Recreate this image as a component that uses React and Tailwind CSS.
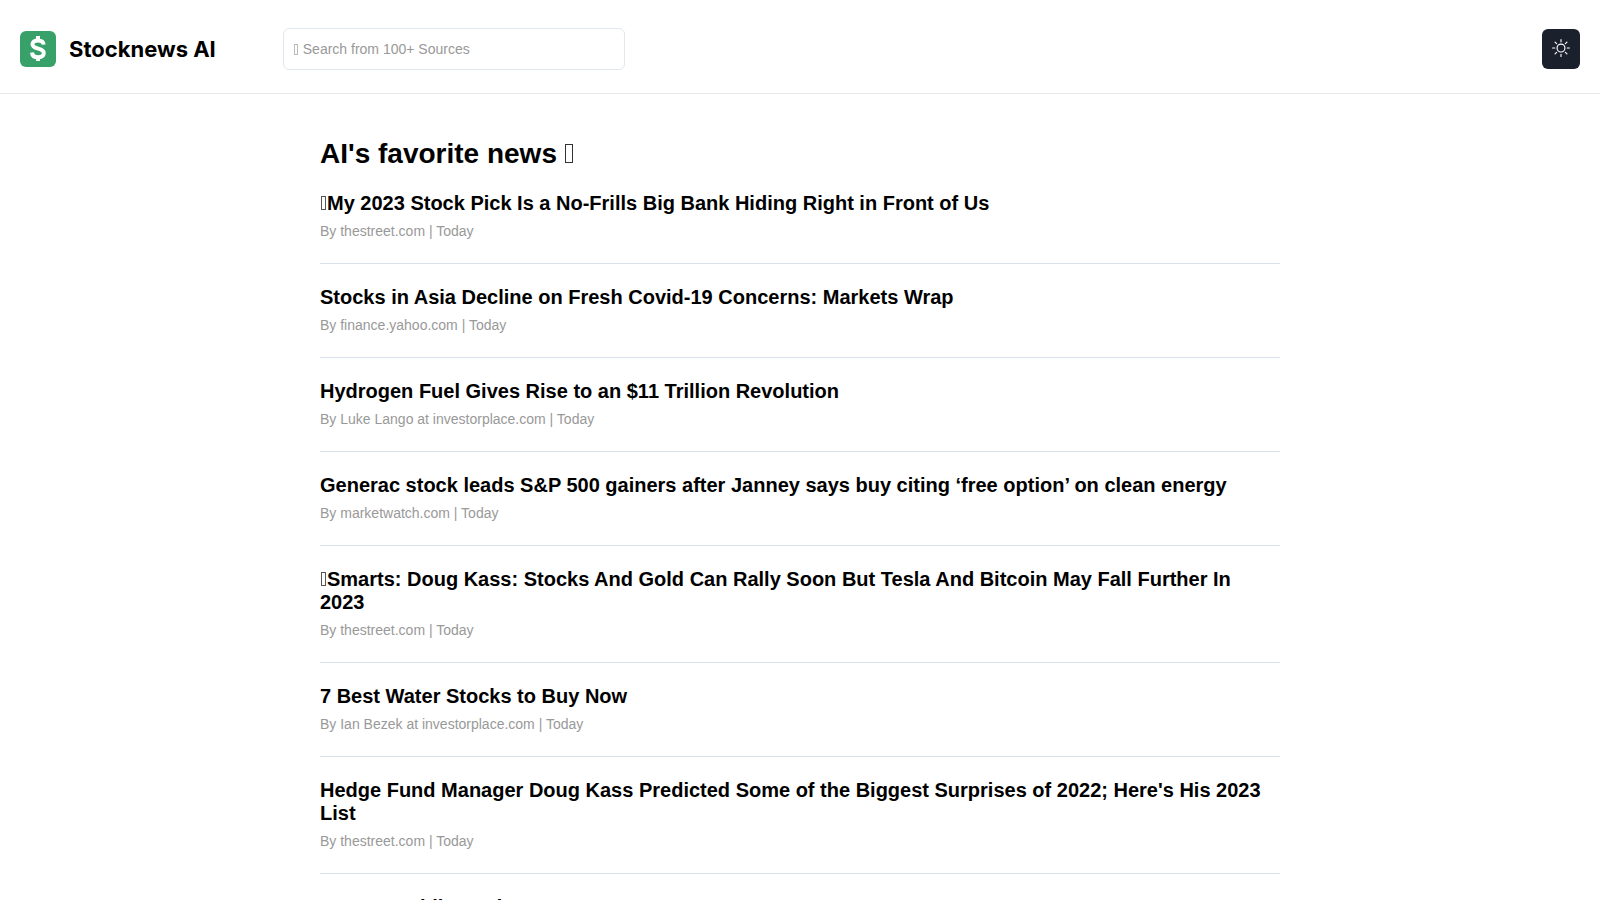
import { BsSun } from "react-icons/bs";

const articles = [
  { title: "My 2023 Stock Pick Is a No-Frills Big Bank Hiding Right in Front of Us", source: "thestreet.com", marked: true },
  { title: "Stocks in Asia Decline on Fresh Covid-19 Concerns: Markets Wrap", source: "finance.yahoo.com" },
  { title: "Hydrogen Fuel Gives Rise to an $11 Trillion Revolution", source: "Luke Lango at investorplace.com" },
  { title: "Generac stock leads S&P 500 gainers after Janney says buy citing ‘free option’ on clean energy", source: "marketwatch.com" },
  { title: "Smarts: Doug Kass: Stocks And Gold Can Rally Soon But Tesla And Bitcoin May Fall Further In 2023", source: "thestreet.com", marked: true },
  { title: "7 Best Water Stocks to Buy Now", source: "Ian Bezek at investorplace.com" },
  { title: "Hedge Fund Manager Doug Kass Predicted Some of the Biggest Surprises of 2022; Here's His 2023 List", source: "thestreet.com" },
  { title: "7 Great Public Trades", source: "investorplace.com" },
];

// small outlined box used as a text marker
function Marker({ className }) {
  return <span aria-hidden="true" className={`inline-block border ${className}`} />;
}

function Logo() {
  return (
    <a href="#" className="flex items-center gap-[13px] text-black">
      <svg width="36" height="36" viewBox="0 0 36 36" aria-hidden="true">
        <rect width="36" height="36" rx="6" fill="#38a169" />
        <path
          d="M23.6 13.6C23.4 10.8 21.4 9.4 18 9.4c-3.3 0-5.5 1.5-5.5 3.9 0 5.8 11.3 2.9 11.3 8.7 0 2.500-2.200 4.200-5.700 4.200-3.700 0-5.900-1.700-6.100-4.700M18 5v4.500M18 26v4"
          fill="none"
          stroke="#fff"
          strokeWidth="4"
        />
      </svg>
      <span className="font-[Inter,sans-serif] text-[22px] leading-7 font-bold">Stocknews AI</span>
    </a>
  );
}

function SearchBox() {
  return (
    <div className="relative ml-[67px]">
      <Marker className="absolute top-4 left-[11px] h-[11px] w-1 border-[#bbb]" />
      <input
        type="search"
        aria-label="Search news"
        placeholder="Search from 100+ Sources"
        className="block h-[42px] w-[342px] rounded-md border border-[#e2e8f0] pr-2.5 pl-[19px] text-sm placeholder:text-[#999]"
      />
    </div>
  );
}

function Article({ title, source, marked }) {
  return (
    <li className="border-b border-[#d9e2ec] pt-[22px] pb-6">
      <h2 className="text-xl leading-[23px] font-bold">
        <a href="#">
          {marked && <Marker className="mx-px h-3.5 w-[5px] border-[#555]" />}
          {title}
        </a>
      </h2>
      <p className="mt-2 text-sm leading-4 text-[#999]">By {source} | Today</p>
    </li>
  );
}

export default function App() {
  return (
    <div className="h-screen overflow-hidden bg-white font-['Liberation_Sans',sans-serif] text-black">
      <header className="flex items-center border-b border-[#eaeaea] px-5 pt-7 pb-[23px]">
        <Logo />
        <SearchBox />
        <button type="button" aria-label="Toggle theme" className="ml-auto flex h-10 w-[38px] items-center justify-center rounded-md bg-[#1a202c] pb-0.5 text-white">
          <BsSun size={18} />
        </button>
      </header>
      <main className="mx-auto max-w-[960px] pt-11">
        <h1 className="text-[28px] leading-8 font-bold">
          AI's favorite news <Marker className="h-[19px] w-2 border-[#333]" />
        </h1>
        <ul>
          {articles.map((article) => (
            <Article key={article.title} {...article} />
          ))}
        </ul>
      </main>
    </div>
  );
}
